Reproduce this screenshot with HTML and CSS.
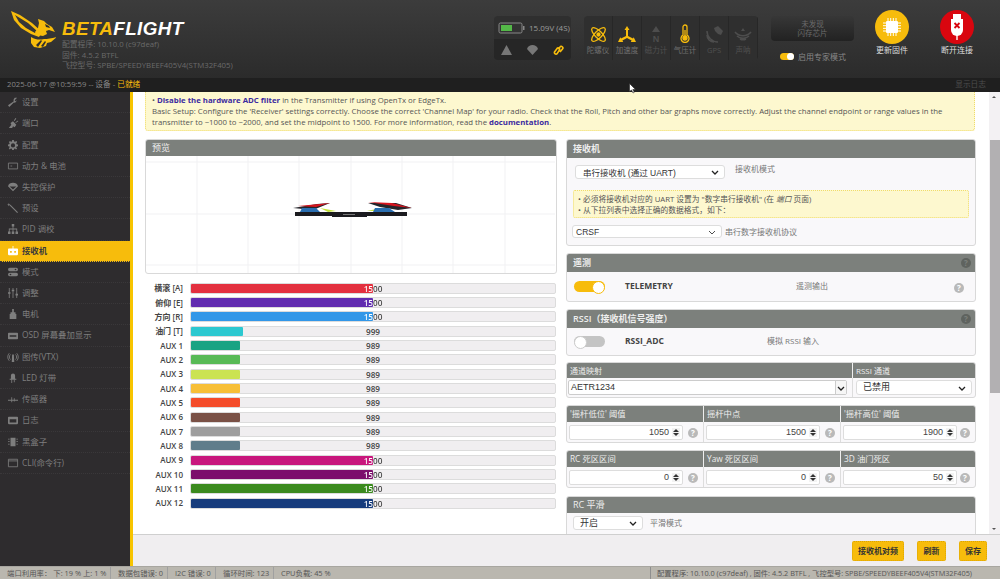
FILE: index.html
```html
<!DOCTYPE html>
<html lang="zh">
<head>
<meta charset="utf-8">
<title>Betaflight</title>
<link rel="stylesheet" href="styles.css">
</head>
<body>
<header class="top">
  <div class="brand">
    <svg class="bee" width="46" height="40" viewBox="0 0 46 40">
      <path fill="#f7bc0c" fill-rule="evenodd" d="M1 1l9 4 12 8 10 9-3 5-8-3-10-6-7-8zM5 5l4 7 7 6 9 5 2-2-9-8z"/>
      <path fill="#f7bc0c" d="M28 9l6 2 3 3 5 3 3 5-6-2-3 1 1 3-4 2-6-1-2-3 3-4 1-5z"/>
      <path fill="#f7bc0c" d="M21 27c5 3 9 3 13 2 4 0 8-1 13-2l-6 5-4 1-1 3-6 2-6-1-3-4z"/>
      <path fill="#2f2f2f" d="M26 35l5-5 1 1-4 6zM31 36l4-5 1 1-3 5zM35 14l4 2 1 2-4-1z"/>
    </svg>
    <div class="brandtext">
      <div class="wordmark"><span class="wm-y">BETA</span>FLIGHT</div>
      <div class="info">配置程序: 10.10.0 (c97deaf)</div>
      <div class="info">固件: 4.5.2 BTFL</div>
      <div class="info">飞控型号: SPBE/SPEEDYBEEF405V4(STM32F405)</div>
    </div>
  </div>
  <div class="batt">
    <div class="batt-top">
      <svg width="27" height="12" viewBox="0 0 27 12"><rect x="1" y="1" width="23" height="10" rx="1.5" fill="#333" stroke="#888"/><rect x="3" y="3" width="11" height="6" fill="#54b848"/><rect x="25" y="4" width="1.5" height="4" fill="#888"/></svg>
      <span>15.09V (4S)</span>
    </div>
    <div class="batt-bot">
      <svg width="11" height="10" viewBox="0 0 11 10"><path fill="#777" d="M5.500 0l5.500 10H0z"/></svg>
      <svg width="11" height="10" viewBox="0 0 11 10"><path fill="#777" d="M0 4c1-3 3-4 5.500-4S10 1 11 4L5.500 10z"/></svg>
      <svg width="11" height="10" viewBox="0 0 11 10"><path fill="none" stroke="#f7bc0c" stroke-width="1.600" d="M1.500 7l3-4a1.500 1.500 0 0 1 2 2l-2 3a1.500 1.500 0 0 1-3-1zM5 4l2-2a1.500 1.500 0 0 1 2.500 2L7 7"/></svg>
    </div>
  </div>
  <div class="sensors">
    <div class="sensor on"><svg width="17" height="17" viewBox="0 0 17 17" fill="none" stroke="#f7bc0c" stroke-width="1.300"><ellipse cx="8.500" cy="8.500" rx="9" ry="3.500" transform="rotate(45 8.500 8.500)"/><ellipse cx="8.500" cy="8.500" rx="9" ry="3.500" transform="rotate(-45 8.500 8.500)"/><circle cx="8.500" cy="8.500" r="1.500" fill="#f7bc0c"/></svg><span>陀螺仪</span></div>
    <div class="sensor on"><svg width="18" height="17" viewBox="0 0 18 17" fill="#f7bc0c"><path d="M9 0l2.500 4H10v6l5 2.500.7-1.300 2.300 4.800-5.200 0 .8-1.400L9 12 4.400 14.600l.8 1.400H0l2.300-4.800.7 1.300 5-2.500V4H6.500z"/></svg><span>加速度</span></div>
    <div class="sensor"><svg width="14" height="17" viewBox="0 0 14 17"><path fill="#4d4d4d" d="M7 0l4 6H3z"/><text x="7" y="16" class="mag">N</text></svg><span>磁力计</span></div>
    <div class="sensor on"><svg width="12" height="19" viewBox="0 0 12 19" fill="none" stroke="#f7bc0c" stroke-width="1.300"><path d="M4 11V3a2 2 0 0 1 4 0v8a4 4 0 1 1-4 0z"/><circle cx="6" cy="14" r="2" fill="#f7bc0c"/><path d="M6 6v7"/></svg><span>气压计</span></div>
    <div class="sensor"><svg width="17" height="17" viewBox="0 0 17 17" fill="none" stroke="#4d4d4d" stroke-width="1.500"><path d="M1 9a7 7 0 0 0 7 7M1 5a11 11 0 0 0 11 11"/><path fill="#4d4d4d" stroke="none" d="M8 2l4-2 5 5-2 4-3-1-3-3z"/></svg><span>GPS</span></div>
    <div class="sensor"><svg width="18" height="17" viewBox="0 0 18 17" fill="none" stroke="#4d4d4d" stroke-width="1.500"><path d="M1 6c4 5 12 5 16 0M3 10c3 3 9 3 12 0M6 13c2 1 4 1 6 0"/><path fill="#4d4d4d" stroke="none" d="M9 2l2 3H7z"/></svg><span>声呐</span></div>
  </div>
  <div class="flashwrap">
    <div class="flash">未发现<br>闪存芯片</div>
    <div class="expert"><span class="mini-toggle"></span><span>启用专家模式</span></div>
  </div>
  <div class="action">
    <div class="circle fw"><svg width="18" height="18" viewBox="0 0 18 18"><path stroke="#fff" d="M5 0v18M7.700 0v18M10.300 0v18M13 0v18M0 5h18M0 7.700h18M0 10.300h18M0 13h18"/><rect x="3" y="3" width="12" height="12" rx="1" fill="#fff"/></svg></div>
    <span>更新固件</span>
  </div>
  <div class="action act2">
    <div class="circle dc"><svg width="14" height="26" viewBox="0 0 14 26"><rect x="3" y="0" width="8" height="5" fill="#fff"/><path fill="#fff" d="M1 5h12v11a6 6 0 0 1-12 0z"/><path stroke="#fff" stroke-width="1.400" d="M7 20v6"/><path stroke="#d9060f" stroke-width="1.800" d="M4.500 9l5 5m0-5l-5 5"/></svg></div>
    <span>断开连接</span>
  </div>
</header>
<div class="logbar">
  <div>2025-06-17 @10:59:59 -- 设备 - <span class="ready">已就绪</span></div>
  <div class="showlog">显示日志</div>
</div>
<svg class="cursor" width="7" height="11" viewBox="0 0 7 11"><path fill="#fff" stroke="#222" stroke-width=".6" d="M.5.500v8l2-1.500 1.500 3 1.300-.7-1.500-2.800H6.500z"/></svg>
<div class="main">
  <nav class="nav">
    <a class="item"><svg class="ic" viewBox="0 0 12 12"><path d="M11 1L8 1 6.500 3.500l.5 1.500L0 10l1.500 2L7 6.500l1.500.3L11 4l-2 1-1-1z"/></svg>设置</a>
    <a class="item"><svg class="ic" viewBox="0 0 12 12"><path d="M1 12l3-4-1-2 3-2 4 4-2 3-2-1-1 2zM7 3l2-3 1 .5-2 3zM9 5l3-2 .3 1-3 2z"/></svg>端口</a>
    <a class="item"><svg class="ic" viewBox="0 0 12 12"><path fill-rule="evenodd" d="M5 0h2l.3 1.700 1.200.5L10 1.200 11 2.500 9.900 4l.4 1.200L12 5.500v2l-1.700.3-.4 1.200L11 10.500 9.500 11.500 8.500 10.200l-1.200.4L7 12H5l-.3-1.400-1.200-.4L2 11.500 1 10l1-1.300-.4-1.100L0 7.500v-2l1.600-.3L2 4 1 2.500 2.500 1.200 3.500 2.200l1.200-.5zM6 4a2.500 2.500 0 1 0 0 5 2.500 2.500 0 0 0 0-5z"/></svg>配置</a>
    <a class="item"><svg class="ic" viewBox="0 0 12 12"><path fill="none" stroke="currentColor" d="M.5 2.500h11v7H.5zM3 6h2"/></svg>动力 &amp; 电池</a>
    <a class="item"><svg class="ic" viewBox="0 0 12 12"><path d="M0 5c1-3 3-4 6-4s5 1 6 4l-6 6zM2 5.500l4 3.500 4-3.500z"/></svg>失控保护</a>
    <a class="item"><svg class="ic" viewBox="0 0 12 12"><path d="M3 2l9 9-1 1-9-9zM1 0l.6 1.400L3 2l-1.400.6L1 4 .4 2.600-1 2l1.400-.6z"/></svg>预设</a>
    <a class="item"><svg class="ic" viewBox="0 0 12 12"><path d="M4.500 0h3v3h-1v2.500H11V9h1v3H9V9h1V6.500H6.500V9h1v3h-3V9h1V6.500H2V9h1v3H0V9h1V5.500h4.500V3h-1z"/></svg>PID 调校</a>
    <a class="item active"><svg class="ic" viewBox="0 0 12 12"><path fill-rule="evenodd" d="M5.500 0h1v3H11a1 1 0 0 1 1 1v6a1 1 0 0 1-1 1H1a1 1 0 0 1-1-1V4a1 1 0 0 1 1-1h4.500zM2.500 6v2h2V6zM7.500 6v2h2V6z"/></svg>接收机</a>
    <a class="item"><svg class="ic" viewBox="0 0 12 12"><path fill-rule="evenodd" d="M2 1h8a2 2 0 0 1 0 4H2a2 2 0 0 1 0-4zM2 7h8a2 2 0 0 1 0 4H2a2 2 0 0 1 0-4zM9 2a1 1 0 1 0 0 2 1 1 0 0 0 0-2zM3 8a1 1 0 1 0 0 2 1 1 0 0 0 0-2z"/></svg>模式</a>
    <a class="item"><svg class="ic" viewBox="0 0 12 12"><path d="M1 0h1v5h1v2H2v5H1V7H0V5h1zM5.500 0h1v2h1v2h-1v8h-1V4h-1V2h1zM10 0h1v7h1v2h-1v3h-1V9H9V7h1z"/></svg>调整</a>
    <a class="item"><svg class="ic" viewBox="0 0 12 12"><path d="M5 0h2v4h2v2h1v6H2V6h1V4h2z"/></svg>电机</a>
    <a class="item"><svg class="ic" viewBox="0 0 12 12"><path fill-rule="evenodd" d="M1 2h10a1 1 0 0 1 1 1v6a1 1 0 0 1-1 1H1a1 1 0 0 1-1-1V3a1 1 0 0 1 1-1zM2 5v2h8V5z"/></svg>OSD 屏幕叠加显示</a>
    <a class="item"><svg class="ic" viewBox="0 0 12 12"><path fill="none" stroke="currentColor" d="M3 3a4 4 0 0 0 0 6M9 3a4 4 0 0 1 0 6M1.500 1.500a6.500 6.500 0 0 0 0 9M10.500 1.500a6.500 6.500 0 0 1 0 9"/><path d="M5 3h2l.5 9h-3z"/></svg>图传(VTX)</a>
    <a class="item"><svg class="ic" viewBox="0 0 12 12"><path d="M3.500 3a2.500 2.500 0 0 1 5 0v4H10v1H2V7h1.500zM4 8h1v4H4zM7 8h1v3H7z"/></svg>LED 灯带</a>
    <a class="item"><svg class="ic" viewBox="0 0 12 12"><path d="M0 7h4V4h1v3h2V5h1v2h4v1H8v1H7V8H5v2H4V8H0z"/></svg>传感器</a>
    <a class="item"><svg class="ic" viewBox="0 0 12 12"><path fill-rule="evenodd" d="M1 2h10a1 1 0 0 1 1 1v7a1 1 0 0 1-1 1H1a1 1 0 0 1-1-1V3a1 1 0 0 1 1-1zM2 5v4h8V5z"/></svg>日志</a>
    <a class="item"><svg class="ic" viewBox="0 0 12 12"><path d="M3 1h6v10H3zM0 2h2v1H0zM0 5h2v1H0zM0 8h2v1H0zM10 2h2v1h-2zM10 5h2v1h-2zM10 8h2v1h-2z"/></svg>黑盒子</a>
    <a class="item"><svg class="ic" viewBox="0 0 12 12"><path fill="none" stroke="currentColor" d="M.5 1.500h11v9H.5zM.5 3.500h11"/></svg>CLI(命令行)</a>
  </nav>
  <div class="area">
    <div class="scrollpane">
      <main class="content">
        <div class="topnote">
          <p>• Use the latest firmware.</p>
          <p>• <b>Disable the hardware ADC filter</b> in the Transmitter if using OpenTx or EdgeTx.</p>
          <p>Basic Setup: Configure the 'Receiver' settings correctly. Choose the correct 'Channel Map' for your radio. Check that the Roll, Pitch and other bar graphs move correctly. Adjust the channel endpoint or range values in the transmitter to ~1000 to ~2000, and set the midpoint to 1500. For more information, read the <b>documentation</b>.</p>
        </div>
        <div class="cols">
          <section class="left">
            <div class="panel preview">
              <div class="phead">预览</div>
              <div class="canvas">
                <svg class="grid" width="409" height="117" viewBox="0 0 409 117">
                  <path stroke="#f1f1f3" fill="none" d="M51 0v117M102 0v117M153 0v117M205 0v117M256 0v117M307 0v117M359 0v117M0 6h409M0 58h409M0 109h409"/>
                  <path fill="#25252a" d="M147 52l24-4 13-1-17 7zM222 47l28 0 16 5-14 2-18-3z"/>
                  <path fill="#d5141e" d="M152 50l32-3-14 4zM222 46l24 1 20 5-18-2z"/>
                  <path fill="#c5e33c" d="M174 52l16 3-8 1zM221 55l14-3 4 3z"/>
                  <path fill="#2a6eb0" d="M156 52l14 0 4 4h-20zM229 52l14 0 6 4h-22z"/>
                  <path fill="#1b1b1f" d="M149 56h37v4h-37zM186 56h35v5h-35zM221 56h40v4h-40z"/>
                  <path fill="#777" d="M197 58h12v1h-12z"/>
                </svg>
              </div>
            </div>
            <div class="bars">
              <div class="bar"><label>横滚 [A]</label><div class="track"><i class="fill red w1500"></i><span class="val split">1500</span></div></div>
              <div class="bar"><label>俯仰 [E]</label><div class="track"><i class="fill purple w1500"></i><span class="val split">1500</span></div></div>
              <div class="bar"><label>方向 [R]</label><div class="track"><i class="fill blue w1500"></i><span class="val split">1500</span></div></div>
              <div class="bar"><label>油门 [T]</label><div class="track"><i class="fill cyan w999"></i><span class="val">999</span></div></div>
              <div class="bar"><label>AUX 1</label><div class="track"><i class="fill teal w989"></i><span class="val">989</span></div></div>
              <div class="bar"><label>AUX 2</label><div class="track"><i class="fill green w989"></i><span class="val">989</span></div></div>
              <div class="bar"><label>AUX 3</label><div class="track"><i class="fill lime w989"></i><span class="val">989</span></div></div>
              <div class="bar"><label>AUX 4</label><div class="track"><i class="fill amber w989"></i><span class="val">989</span></div></div>
              <div class="bar"><label>AUX 5</label><div class="track"><i class="fill orange w989"></i><span class="val">989</span></div></div>
              <div class="bar"><label>AUX 6</label><div class="track"><i class="fill brown w989"></i><span class="val">989</span></div></div>
              <div class="bar"><label>AUX 7</label><div class="track"><i class="fill gray w989"></i><span class="val">989</span></div></div>
              <div class="bar"><label>AUX 8</label><div class="track"><i class="fill slate w989"></i><span class="val">989</span></div></div>
              <div class="bar"><label>AUX 9</label><div class="track"><i class="fill pink w1500"></i><span class="val split">1500</span></div></div>
              <div class="bar"><label>AUX 10</label><div class="track"><i class="fill violet w1500"></i><span class="val split">1500</span></div></div>
              <div class="bar"><label>AUX 11</label><div class="track"><i class="fill dkgreen w1500"></i><span class="val split">1500</span></div></div>
              <div class="bar"><label>AUX 12</label><div class="track"><i class="fill navy w1500"></i><span class="val split">1500</span></div></div>
            </div>
          </section>
          <section class="right">
            <div class="panel p-rx">
              <div class="phead tall">接收机</div>
              <div class="rx-row"><div class="sel sel-rx">串行接收机 (通过 UART)<svg class="chev" viewBox="0 0 8 5"><path d="M1 1l3 3 3-3"/></svg></div><span class="hint">接收机模式</span></div>
              <div class="innernote">• 必须将接收机对应的 UART 设置为 "数字串行接收机" (在 <em>端口</em> 页面)<br>• 从下拉列表中选择正确的数据格式，如下：</div>
              <div class="rx-row2"><div class="sel sel-crsf">CRSF<svg class="chev thin" viewBox="0 0 8 5"><path d="M1 1l3 3 3-3"/></svg></div><span class="hint">串行数字接收机协议</span></div>
            </div>
            <div class="panel p-tel">
              <div class="phead tall">遥测<span class="help dark">?</span></div>
              <div class="feat">
                <span class="switch on"></span><b>TELEMETRY</b><span class="fdesc fd1">遥测输出</span><span class="help">?</span>
              </div>
            </div>
            <div class="panel p-rssi">
              <div class="phead tall">RSSI（接收机信号强度）<span class="help dark">?</span></div>
              <div class="feat">
                <span class="switch"></span><b>RSSI_ADC</b><span class="fdesc fd2">模拟 RSSI 输入</span>
              </div>
            </div>
            <div class="panel p-map">
              <div class="map">
                <div class="mh mh1">通道映射</div><div class="mh">RSSI 通道</div>
                <div class="mc mc1"><div class="combo">AETR1234<span class="combo-btn"><svg class="chev" viewBox="0 0 8 5"><path d="M1 1l3 3 3-3"/></svg></span></div></div>
                <div class="mc"><div class="sel sel-rssi">已禁用<svg class="chev" viewBox="0 0 8 5"><path d="M1 1l3 3 3-3"/></svg></div></div>
              </div>
            </div>
            <div class="panel p-num">
              <div class="tri">
                <div class="th">'摇杆低位' 阈值</div><div class="th">摇杆中点</div><div class="th">'摇杆高位' 阈值</div>
                <div class="td"><div class="num">1050<span class="spin"></span></div><span class="help">?</span></div>
                <div class="td"><div class="num">1500<span class="spin"></span></div><span class="help">?</span></div>
                <div class="td"><div class="num">1900<span class="spin"></span></div><span class="help">?</span></div>
              </div>
            </div>
            <div class="panel p-dead">
              <div class="tri">
                <div class="th">RC 死区区间</div><div class="th">Yaw 死区区间</div><div class="th">3D 油门死区</div>
                <div class="td"><div class="num">0<span class="spin"></span></div><span class="help">?</span></div>
                <div class="td"><div class="num">0<span class="spin"></span></div><span class="help">?</span></div>
                <div class="td"><div class="num">50<span class="spin"></span></div><span class="help">?</span></div>
              </div>
            </div>
            <div class="panel p-smooth">
              <div class="phead">RC 平滑</div>
              <div class="rx-row3"><div class="sel sel-on">开启<svg class="chev" viewBox="0 0 8 5"><path d="M1 1l3 3 3-3"/></svg></div><span class="hint">平滑模式</span></div>
            </div>
          </section>
        </div>
      </main>
      <div class="sb"><span class="sb-up"></span><span class="sb-thumb"></span><span class="sb-down"></span></div>
    </div>
    <div class="toolbar">
      <button class="btn b1">接收机对频</button>
      <button class="btn b2">刷新</button>
      <button class="btn b3">保存</button>
    </div>
  </div>
</div>
<footer class="status">
  <div class="st s1">端口利用率：&nbsp;下: 19 % 上: 1 %</div>
  <div class="st s2">数据包错误: 0</div>
  <div class="st s3">I2C 错误: 0</div>
  <div class="st s4">循环时间: 123</div>
  <div class="st s5">CPU负载: 45 %</div>
  <div class="st-right">配置程序: 10.10.0 (c97deaf) , 固件: 4.5.2 BTFL , 飞控型号: SPBE/SPEEDYBEEF405V4(STM32F405)</div>
</footer>
</body>
</html>
```
FILE: styles.css
```css
*{box-sizing:border-box}
html,body{margin:0;height:100%;overflow:hidden}
body{width:1000px;height:579px;display:flex;flex-direction:column;position:relative;font:9px/1.2 "Open Sans","Noto Sans CJK SC",sans-serif;color:#555;background:#f0eef0}
p{margin:0}

/* header */
.top{height:78px;flex:none;display:flex;background:linear-gradient(#3c3c3c,#2b2b2b);position:relative}
.brand{width:494px;flex:none;display:flex;padding:10px 0 0 10px}
.bee{flex:none;margin-right:6px}
.brandtext{padding-top:9px}
.wordmark{font:italic 700 18.800px/20px "Liberation Sans",sans-serif;color:#fff;letter-spacing:.4px}
.wm-y{color:#f7bc0c}
.info{font-size:7.800px;line-height:10.500px;color:#6a6a6a;white-space:nowrap}
.batt{margin-top:16px;width:77px;height:44px;border-radius:4px;background:#2f2f2f;flex:none;overflow:hidden}
.batt-top{height:23px;display:flex;align-items:center;gap:4px;padding-left:4px;color:#9c9c9c;font-size:8px}
.batt-top span{white-space:nowrap}
.batt-bot{height:21px;background:#262626;display:flex;justify-content:space-between;align-items:center;padding:0 7px}
.sensors{margin:16px 0 0 13px;width:174px;height:44px;border-radius:4px;background:#2f2f2f;display:flex;flex:none;overflow:hidden}
.sensor{flex:1;display:flex;flex-direction:column;align-items:center;justify-content:flex-end;gap:3px;padding-bottom:5px;border-right:1px solid #272727;color:#4f4f4f;font-size:7.500px;line-height:9px}
.sensor.on{color:#6f6f6f}
.mag{font:700 9px "Liberation Sans",sans-serif;fill:#4d4d4d;text-anchor:middle}
.flashwrap{margin:16px 0 0 13px;width:83px;flex:none}
.flash{height:25px;border-radius:4px;background:linear-gradient(#373737,#222);color:#6b6b6b;font-size:7.500px;line-height:8.500px;text-align:center;padding-top:4px}
.expert{display:flex;align-items:center;gap:4px;margin:11px 0 0 9px;color:#888;font-size:8px;white-space:nowrap}
.mini-toggle{width:14px;height:7px;border-radius:4px;background:#f7bc0c;position:relative;flex:none}
.mini-toggle::after{content:"";position:absolute;right:0;top:0;width:7px;height:7px;border-radius:50%;background:#fff}
.action{margin:10px 0 0 8px;width:60px;display:flex;flex-direction:column;align-items:center;gap:1px;color:#ddd;font-size:8px;flex:none}
.act2{margin-left:5px}
.circle{width:34px;height:34px;border-radius:50%;display:flex;align-items:center;justify-content:center}
.fw{background:#f7bc0c}
.dc{background:#d9060f}

.logbar{height:14px;flex:none;background:#1f1f1f;display:flex;justify-content:space-between;align-items:center;padding:0 14px 0 7px;color:#888;font-size:7.700px;white-space:nowrap}
.ready{color:#f7bc0c}
.showlog{color:#4d4d4d}
.cursor{position:absolute;left:629px;top:83px}

.main{flex:1;min-height:0;display:flex}
.nav{width:133px;flex:none;background:#2e2c2e;border-right:3px solid #f7c400;display:flex;flex-direction:column}
.item{height:21.230px;flex:none;display:flex;align-items:center;gap:4px;padding-left:8px;color:#7e7e7e;font-size:8.400px;border-bottom:1px dotted #3a383a;white-space:nowrap}
.item.active{background:#f7bc0c;color:#3a3a3a;font-weight:600}
.active .ic{color:#fff;fill:#fff}
.ic{width:10px;height:10px;flex:none;fill:currentColor;overflow:visible}

.area{flex:1;min-width:0;display:flex;flex-direction:column}
.scrollpane{flex:1;min-height:0;display:flex;overflow:hidden;background:#fff}
.content{flex:1;min-width:0;overflow:hidden;padding:0 14px 0 12px}
.sb{width:11px;flex:none;background:#f3f1f3;display:flex;flex-direction:column}
.sb-up,.sb-down{height:10px;flex:none;position:relative}
.sb-up::after,.sb-down::after{content:"";position:absolute;left:3px;top:4px;border:2.500px solid transparent;border-bottom-color:#555;border-top:0}
.sb-down::after{border-bottom:0;border-top:2.500px solid #555}
.sb-thumb{height:253px;margin-top:38px;margin-left:1px;background:#b2b0b2;margin-bottom:auto}

.topnote{height:39px;background:#fdf8cf;border:1px dotted #f0dc6a;border-top:0;border-radius:0 0 3px 3px;padding:0 6px 2.500px;color:#555;font-size:7.800px;line-height:10.800px;overflow:hidden;display:flex;flex-direction:column;justify-content:flex-end}
.topnote p{flex:none}
.topnote b{color:#3b2aa0;font-weight:700}
.cols{display:grid;grid-template-columns:412px 410px;gap:9px;margin-top:8px}
.panel{background:#f9f8fa;border:1px solid #d9d9d9;border-radius:3px;overflow:hidden}
.phead{height:16px;background:#7c807c;color:#eee;font-size:9px;line-height:16px;padding-left:6px;position:relative}
.phead.tall{height:18px;line-height:18px;font-weight:600}
.preview{height:135px;background:#fff}
.canvas{height:117px}
.grid{display:block}

.bars{margin-top:7px;display:flex;flex-direction:column}
.bar{height:14.330px;display:flex;align-items:center;flex:none}
.bar label{width:38px;flex:none;text-align:right;color:#444;font-weight:600;font-size:8px;white-space:nowrap;margin-right:7px}
.track{flex:1;margin-right:1px;height:11px;background:#f0eef0;border:1px solid #dcdcdc;border-radius:2px;position:relative}
.fill{position:absolute;left:0;top:0;bottom:0;border-radius:1px}
.w1500{width:50%}
.w999{width:14.300%}
.w989{width:13.400%}
.red{background:#e3303f}.purple{background:#612cb0}.blue{background:#3297e8}.cyan{background:#2cc8d0}
.teal{background:#19a383}.green{background:#58ba56}.lime{background:#cbe352}.amber{background:#f7bf37}
.orange{background:#f44c2a}.brown{background:#7a5146}.gray{background:#9e9e9e}.slate{background:#607d8b}
.pink{background:#c8177d}.violet{background:#7c0e6c}.dkgreen{background:#3b8a1e}.navy{background:#173c7c}
.val{position:absolute;left:0;right:0;top:0;text-align:center;font-size:8.200px;font-weight:600;line-height:9px;color:#444}
.val.split{background:linear-gradient(90deg,#fff 50%,#444 50%);-webkit-background-clip:text;background-clip:text;color:transparent}

.right{display:flex;flex-direction:column;min-width:0}
.p-rx{height:107px}
.rx-row{display:flex;margin:7px 0 0 8px;height:14px}
.hint{color:#777;font-size:8px;white-space:nowrap}
.rx-row .hint{margin:-1px 0 0 10px}
.sel{background:#fff;border:1px solid #ddd;border-radius:3px;color:#333;position:relative;display:flex;align-items:center;white-space:nowrap}
.chev{width:8px;height:5px;position:absolute;right:5px;top:50%;margin-top:-2px;fill:none;stroke:#222;stroke-width:1.300}
.chev.thin{stroke-width:.8}
.combo-btn .chev{right:1px}
.sel-rx{width:150px;height:14px;padding-left:7px;font:8.500px "Liberation Sans","Noto Sans CJK SC",sans-serif}
.innernote{margin:11px 6px 0;height:28px;background:#fdf8cf;border:1px dotted #f0dc6a;border-radius:2px;padding:3px 4px;font-size:7.750px;line-height:10.500px;color:#555}
.rx-row2{display:flex;align-items:center;margin:7px 0 0 5px}
.sel-crsf{width:150px;height:13px;padding-left:3px;font:8.500px "Liberation Sans",sans-serif;margin-right:3px}
.p-tel{margin-top:7px;height:49px}
.p-rssi{margin-top:7px;height:47px}
.help{position:absolute;width:10px;height:10px;border-radius:50%;background:#b9b9b9;color:#fff;font-size:8px;line-height:10px;text-align:center;font-weight:700}
.help.dark{background:#5f635f;color:#7c807c;right:4px;top:4px}
.feat{position:relative;height:30px;display:flex;align-items:flex-start;padding:9px 0 0 7px}
.feat b{position:absolute;left:58px;top:9px;color:#444;font-size:8.500px}
.feat .help{right:11px;top:11px}
.fdesc{position:absolute;top:9px;color:#777;font-size:8px;white-space:nowrap}
.p-rssi .feat{padding-top:8px}
.p-rssi .feat b,.p-rssi .fdesc{top:8px}
.fd1{left:229px}
.fd2{left:200px}
.switch{width:31px;height:11px;border-radius:6px;background:#c4c4c4;position:relative;display:block}
.switch::after{content:"";position:absolute;left:0;top:0;width:11px;height:11px;border-radius:50%;background:#fff;border:1px solid #ccc}
.switch.on{background:#f7bc0c}
.switch.on::after{left:auto;right:0;border-color:#f7bc0c}
.p-map{margin-top:6px;height:36px}
.map{display:grid;grid-template-columns:286px 1fr}
.mh{height:15px;background:#7c807c;color:#eee;font-size:8px;line-height:15px;padding-left:3px}
.mh1{border-right:1px solid #f0f0f0}
.mc{height:20px;padding:2px 3px}
.mc1{border-right:1px solid #ddd;padding:2px 5px 2px 1px}
.combo{height:15px;background:#fff;border:1px solid #ccc;border-radius:2px;font:9px/13px "Liberation Sans",sans-serif;color:#333;padding-left:2px;position:relative}
.combo-btn{position:absolute;right:0;top:0;bottom:0;width:11px;border-left:1px solid #ccc;background:#f6f6f6}
.sel-rssi{height:15px;padding-left:6px;font-size:9px}
.p-num{margin-top:7px;height:38px}
.p-dead{margin-top:7px;height:38px}
.tri{display:grid;grid-template-columns:137px 137px 1fr}
.th{height:16px;background:#7c807c;color:#eee;font-size:8.300px;line-height:16px;padding-left:3px;border-right:1px solid #eee;white-space:nowrap}
.th:nth-child(3){border-right:0}
.td{height:22px;position:relative;padding:3px 0 0 2px;border-right:1px solid #ddd}
.td:last-child{border-right:0}
.td .help{right:5px;top:6px}
.num{width:114px;height:15px;background:#fff;border:1px solid #ddd;border-radius:2px;text-align:right;padding-right:13px;font:9px/13px "Liberation Sans",sans-serif;color:#444;position:relative}
.spin{position:absolute;right:2px;top:2px;width:8px;height:9px;background:#f3f3f3}
.spin::before,.spin::after{content:"";position:absolute;left:1px;border:3px solid transparent}
.spin::before{border-bottom-color:#333;border-top:0;top:1px}
.spin::after{bottom:1px;border-top-color:#333;border-bottom:0}
.p-smooth{margin-top:8px;height:60px}
.rx-row3{display:flex;align-items:center;gap:7px;margin:3px 0 0 6px}
.sel-on{width:70px;height:14px;padding-left:6px;font-size:9px}

.toolbar{height:32px;flex:none;background:#f0eef0;border-top:1px solid #cfcfcf;display:flex;align-items:center;padding:0 13px 0 0;justify-content:flex-end}
.btn{height:20px;background:#f7bc0c;border:1px dotted #dca500;border-radius:2px;color:#333;font:600 8px "Open Sans","Noto Sans CJK SC",sans-serif;padding:0}
.b1{width:52px}
.b2{width:29px;margin-left:13px}
.b3{width:28px;margin-left:13px}

.status{height:13px;flex:none;background:#bab7af;border-top:1px solid #a8a6a0;display:flex;align-items:center;color:#555;font-size:7.400px;white-space:nowrap}
.st{height:100%;display:flex;align-items:center;padding-left:7px;border-right:1px solid #a0a0a0}
.s1{width:111px}.s2{width:57px}.s3{width:48px}.s4{width:58px}.s5{width:58px;border:0}
.st-right{margin-left:auto;border-left:1px solid #8f8f8f;height:100%;padding:0 0 0 6px;width:350px;display:flex;align-items:center;font-size:7.300px;overflow:hidden}
```
